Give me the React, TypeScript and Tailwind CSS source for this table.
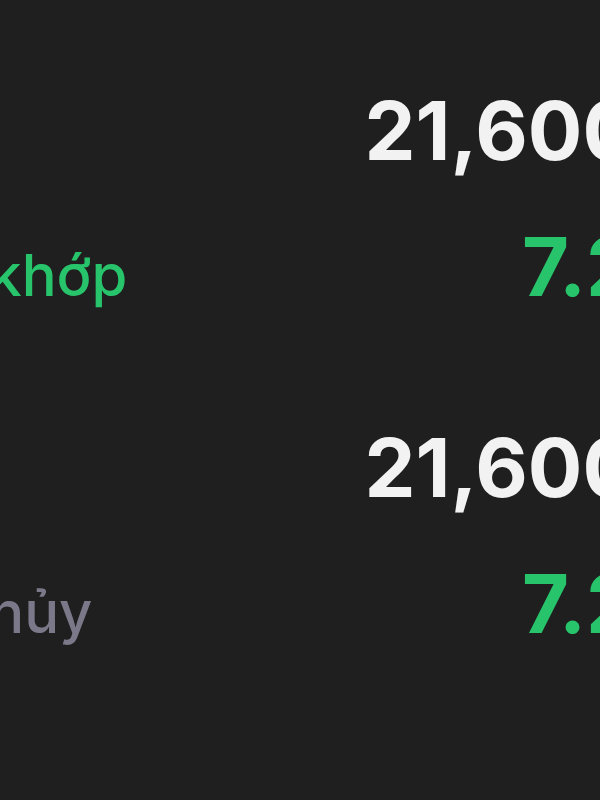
export default function App() {
  const Group = ({ label, labelColor, mt }: { label: string; labelColor: string; mt: string }) => (
    <div className={mt}>
      <div className="flex w-[600px] leading-none">
        <div className="flex-1 flex justify-end mr-[-37px]">
          <span className="whitespace-nowrap text-[81px] font-bold text-[#f2f2f2] leading-none">21,600</span>
        </div>
      </div>
      <div className="mt-[55px] flex w-[600px] items-baseline leading-none">
        <div className="w-[300px] shrink-0 flex justify-start">
          <span className={`-ml-[101px] whitespace-nowrap text-[58px] font-medium leading-none ${labelColor}`}>{label}</span>
        </div>
        <div className="flex-1 flex justify-end mr-[-37px]">
          <span className="whitespace-nowrap text-[81px] font-bold text-[#27c46b] leading-none">7.2</span>
        </div>
      </div>
    </div>
  );
  return (
    <div className="w-[600px] h-[800px] overflow-hidden bg-[#1f1f1f] font-['Inter',sans-serif] pt-[91px]">
      <Group label="Đã khớp" labelColor="text-[#27c46b]" mt="mt-0" />
      <Group label="Đã hủy" labelColor="text-[#7a7889]" mt="mt-[120px]" />
    </div>
  );
}
